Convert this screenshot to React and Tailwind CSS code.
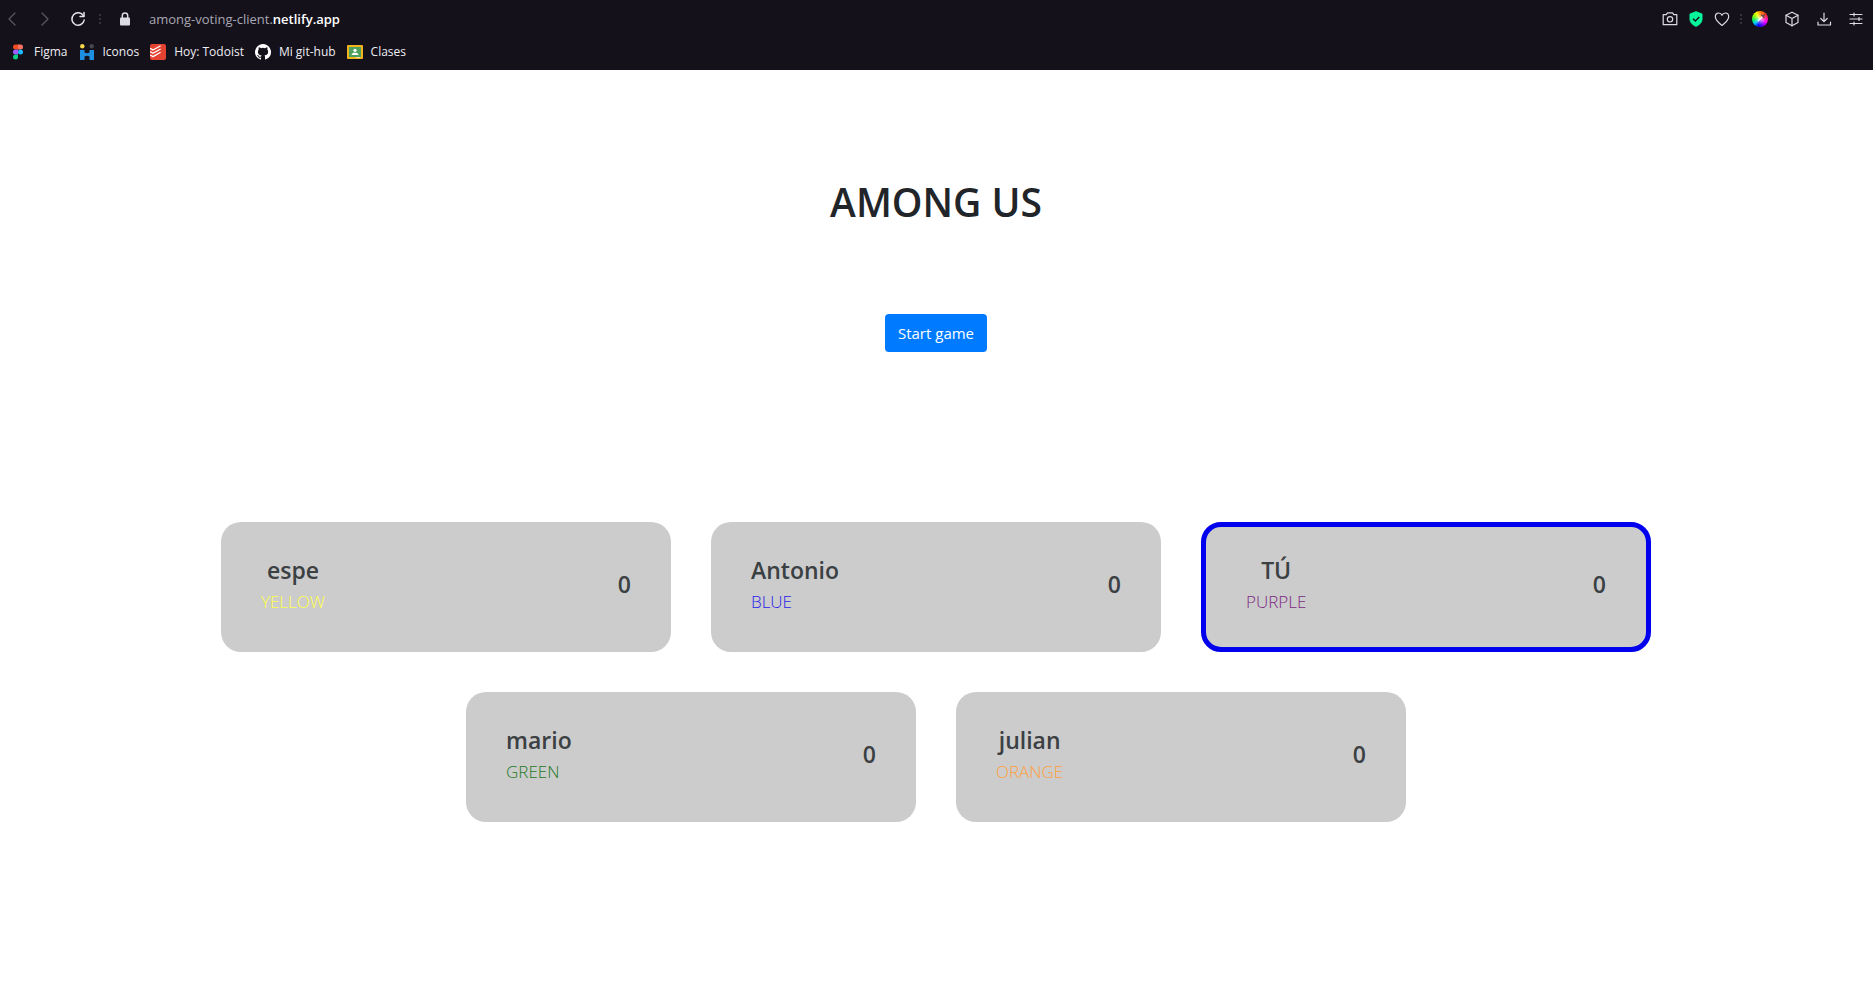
import React from "react";

const players = [
  { name: "espe", color: "YELLOW", tone: "text-[#ffff4a]", votes: 0 },
  { name: "Antonio", color: "BLUE", tone: "text-[#2a22ea]", votes: 0 },
  { name: "TÚ", color: "PURPLE", tone: "text-[#7c2a84]", votes: 0, self: true },
  { name: "mario", color: "GREEN", tone: "text-[#227a22]", votes: 0 },
  { name: "julian", color: "ORANGE", tone: "text-[#ff9f3c]", votes: 0 },
];

const stroke = { fill: "none", stroke: "currentColor", strokeLinecap: "round", strokeLinejoin: "round" };

function Icon({ children, ...rest }) {
  return (
    <svg viewBox="0 0 16 16" width="16" height="16" aria-hidden="true" {...rest}>
      {children}
    </svg>
  );
}

function Dots() {
  return (
    <Icon width="2" viewBox="0 0 2 16" fill="#34323c">
      <rect y="3" width="2" height="2" />
      <rect y="7" width="2" height="2" />
      <rect y="11" width="2" height="2" />
    </Icon>
  );
}

function BarButton({ label, children }) {
  return (
    <button type="button" aria-label={label} className="flex size-4 shrink-0 items-center justify-center">
      {children}
    </button>
  );
}

function FigmaIcon() {
  return (
    <Icon>
      <path d="M5.500 .5H8v5H5.500a2.500 2.500 0 0 1 0-5z" fill="#f24e1e" />
      <path d="M8 .5h2.500a2.500 2.500 0 0 1 0 5H8z" fill="#ff7262" />
      <path d="M5.500 5.500H8v5H5.500a2.500 2.500 0 0 1 0-5z" fill="#a259ff" />
      <circle cx="10.500" cy="8" r="2.500" fill="#1abcfe" />
      <path d="M5.500 10.500H8V13a2.500 2.500 0 1 1-2.500-2.500z" fill="#0acf83" />
    </Icon>
  );
}

function IconosIcon() {
  return (
    <Icon>
      <circle cx="3.300" cy="2.300" r="2.200" fill="#f7d64a" />
      <circle cx="12.700" cy="2.300" r="2.200" fill="#45474d" />
      <path d="M1 6h4.500v2.600c1.600.9 3.400.9 5 0V6H15v10h-4.500v-3.600c-1.600-.8-3.400-.8-5 0V16H1z" fill="#1e8fe0" />
    </Icon>
  );
}

function TodoistIcon() {
  return (
    <Icon>
      <rect width="16" height="16" rx="2" fill="#e44332" />
      <g {...stroke} stroke="#fff" strokeWidth="1.300">
        <path d="M.6 4.600 3 6l7.200-4" />
        <path d="M.6 7.900 3 9.300l7.200-4.100" />
        <path d="M.6 11.200 3 12.600l7.200-4.100" />
      </g>
    </Icon>
  );
}

function GithubIcon() {
  return (
    <Icon fill="#fff">
      <path d="M8 0a8 8 0 0 0-2.530 15.590c.4.070.55-.17.55-.38v-1.490c-2.010.37-2.530-.49-2.690-.94-.09-.23-.48-.94-.82-1.130-.28-.15-.68-.52-.01-.53.63-.01 1.080.58 1.230.82.72 1.210 1.870.87 2.330.66.070-.52.280-.87.510-1.070-1.780-.2-3.640-.89-3.640-3.950 0-.87.310-1.590.82-2.150-.08-.2-.36-1.020.08-2.120 0 0 .67-.21 2.200.82a7.420 7.420 0 0 1 4 0c1.530-1.040 2.200-.82 2.200-.82.44 1.100.16 1.920.08 2.120.51.56.82 1.270.82 2.150 0 3.070-1.870 3.750-3.650 3.950.29.25.54.73.54 1.480v2.200c0 .21.15.46.55.38A8 8 0 0 0 8 0z" />
    </Icon>
  );
}

function ClassroomIcon() {
  return (
    <Icon>
      <rect y="1" width="16" height="14" rx="1" fill="#f0b41e" />
      <rect x="2" y="3" width="12" height="10" fill="#4fa05c" />
      <circle cx="8" cy="6.300" r="1.600" fill="#fff" />
      <path d="M4.500 11c0-1.700 1.700-2.300 3.500-2.300s3.500.6 3.500 2.300z" fill="#fff" />
      <path d="M9 13h4v1H9z" fill="#f7e0a0" />
    </Icon>
  );
}

const bookmarks = [
  { label: "Figma", icon: FigmaIcon },
  { label: "Iconos", icon: IconosIcon },
  { label: "Hoy: Todoist", icon: TodoistIcon },
  { label: "Mi git-hub", icon: GithubIcon },
  { label: "Clases", icon: ClassroomIcon },
];

function AddressBar() {
  return (
    <div className="flex h-[38px] items-center justify-between pl-1 pr-[9px] text-[#dcdbe4]">
      <div className="flex items-center">
        <div className="flex items-center gap-[17px] text-[#5a5862]">
          <BarButton label="Back">
            <Icon {...stroke} strokeWidth="1.200">
              <path d="M11 2 5 8l6 6" />
            </Icon>
          </BarButton>
          <BarButton label="Forward">
            <Icon {...stroke} strokeWidth="1.200">
              <path d="m5 2 6 6-6 6" />
            </Icon>
          </BarButton>
          <span className="flex text-[#e6e5ee]">
            <BarButton label="Reload">
              <Icon {...stroke} strokeWidth="1.500">
                <path d="M13.500 5A6.200 6.200 0 1 0 14.200 9" />
                <path d="M14 1.500V5.500H10" />
              </Icon>
            </BarButton>
          </span>
        </div>
        <div className="ml-[13px] flex items-center gap-4">
          <Dots />
          <BarButton label="Site information">
            <Icon>
              <rect x="3" y="6.500" width="10" height="8" rx="1" fill="currentColor" />
              <path d="M5.300 7V4.700a2.700 2.700 0 0 1 5.400 0V7" fill="none" stroke="currentColor" strokeWidth="1.500" />
            </Icon>
          </BarButton>
          <a href="#address" className="text-[13px] leading-5 text-[#a9a7b3]">
            among-voting-client.<span className="font-semibold text-white">netlify.app</span>
          </a>
        </div>
      </div>
      <div className="flex items-center gap-4">
        <div className="flex items-center gap-[10px]">
          <BarButton label="Snapshot">
            <Icon {...stroke} strokeWidth="1.200">
              <path d="M1.200 3.700h3L5.500 1.800h5l1.300 1.900h3v10H1.200z" />
              <circle cx="8" cy="8.300" r="2.700" />
            </Icon>
          </BarButton>
          <BarButton label="Protection">
            <Icon>
              <path d="M8 .7 14 3v5c0 3.600-2.600 6-6 7.300C4.600 14 2 11.600 2 8V3z" fill="#08f59b" stroke="#08f59b" strokeLinejoin="round" />
              <path d="m5 7.800 2.300 2.200 4-4" fill="none" stroke="#14111a" strokeWidth="1.400" />
            </Icon>
          </BarButton>
          <BarButton label="Save to favourites">
            <Icon {...stroke} strokeWidth="1.200">
              <path d="M8 14.500C5.500 12.400 1.300 9.200 1.300 5.700 1.300 3.500 2.900 2 4.700 2 6.200 2 7.400 2.900 8 4.300 8.600 2.900 9.800 2 11.300 2c1.800 0 3.400 1.500 3.400 3.700 0 3.500-4.200 6.700-6.700 8.800z" />
            </Icon>
          </BarButton>
          <Dots />
          <button
            type="button"
            aria-label="Color picker"
            className="flex size-4 items-center justify-center rounded-full bg-[radial-gradient(circle,rgba(255,255,255,0.7),rgba(255,255,255,0)_55%),conic-gradient(#f80,#f33_15%,#f0f_32%,#60f_44%,#00f_54%,#0cf_64%,#0e6_72%,#8f0_82%,#ff0_92%,#f80)]"
          >
            <Icon {...stroke} stroke="#5b4a3f" strokeWidth="1.200">
              <path d="m6.500 9.500 4-4" stroke="#fff" />
              <path d="m9.500 4 2.500 2.500M11.200 5l1.300-1.300" />
            </Icon>
          </button>
        </div>
        <BarButton label="Extensions">
          <Icon {...stroke} strokeWidth="1.200">
            <path d="M8 1.200 14 4.300v7.200l-6 3.300-6-3.300V4.300z" />
            <path d="m2 4.300 6 3.200 6-3.200M8 7.500v7.300" />
          </Icon>
        </BarButton>
        <BarButton label="Downloads">
          <Icon {...stroke} strokeWidth="1.200">
            <path d="M8 2v8.500M4.800 7.500 8 10.700l3.200-3.200M2 11v3h12.500v-3" />
          </Icon>
        </BarButton>
        <BarButton label="Easy setup">
          <Icon {...stroke} strokeWidth="1.200">
            <path d="M2 3.500h12M2 8h12M2 12.500h12M6 2v3M11 6.500v3M6 11v3" />
          </Icon>
        </BarButton>
      </div>
    </div>
  );
}

function PlayerCard({ name, color, tone, votes, self }) {
  return (
    <li
      className={
        self
          ? "flex h-[130px] w-[450px] items-center justify-between rounded-[20px] border-[5px] border-[#0000ee] bg-[#cccccc] px-10 pb-0.5"
          : "flex h-[130px] w-[450px] items-center justify-between rounded-[20px] bg-[#cccccc] px-10 pb-0.5"
      }
    >
      <div>
        <h2 className="text-center text-[23px] font-semibold leading-8 text-[#3b4043]">{name}</h2>
        <p className={tone + " text-[17px] font-light leading-8"}>{color}</p>
      </div>
      <span className="mb-1 text-[23px] font-semibold leading-8 text-[#3b4043]">{votes}</span>
    </li>
  );
}

export default function App() {
  return (
    <div className="min-h-screen bg-white font-['Open_Sans','Noto_Sans',sans-serif]">
      <header className="bg-[#14111a] pb-1">
        <AddressBar />
        <nav aria-label="Bookmarks" className="flex h-7 items-center gap-[11px] pl-[10px]">
          {bookmarks.map(({ label, icon: Glyph }) => (
            <a key={label} href="#bookmark" className="flex items-center gap-2 text-xs text-[#eeedf3]">
              <Glyph />
              {label}
            </a>
          ))}
        </nav>
      </header>
      <main className="flex flex-col items-center pr-px pt-[108px]">
        <h1 className="text-[39px] font-semibold leading-12 text-[#212529]">AMONG US</h1>
        <button type="button" className="mt-[88px] rounded-sm bg-[#007bff] px-[13px] py-[7px] text-[15px] leading-6 text-white">
          Start game
        </button>
        <ul className="mt-[170px] flex max-w-[1470px] flex-wrap justify-center gap-10">
          {players.map((player) => (
            <PlayerCard key={player.name} {...player} />
          ))}
        </ul>
      </main>
    </div>
  );
}
